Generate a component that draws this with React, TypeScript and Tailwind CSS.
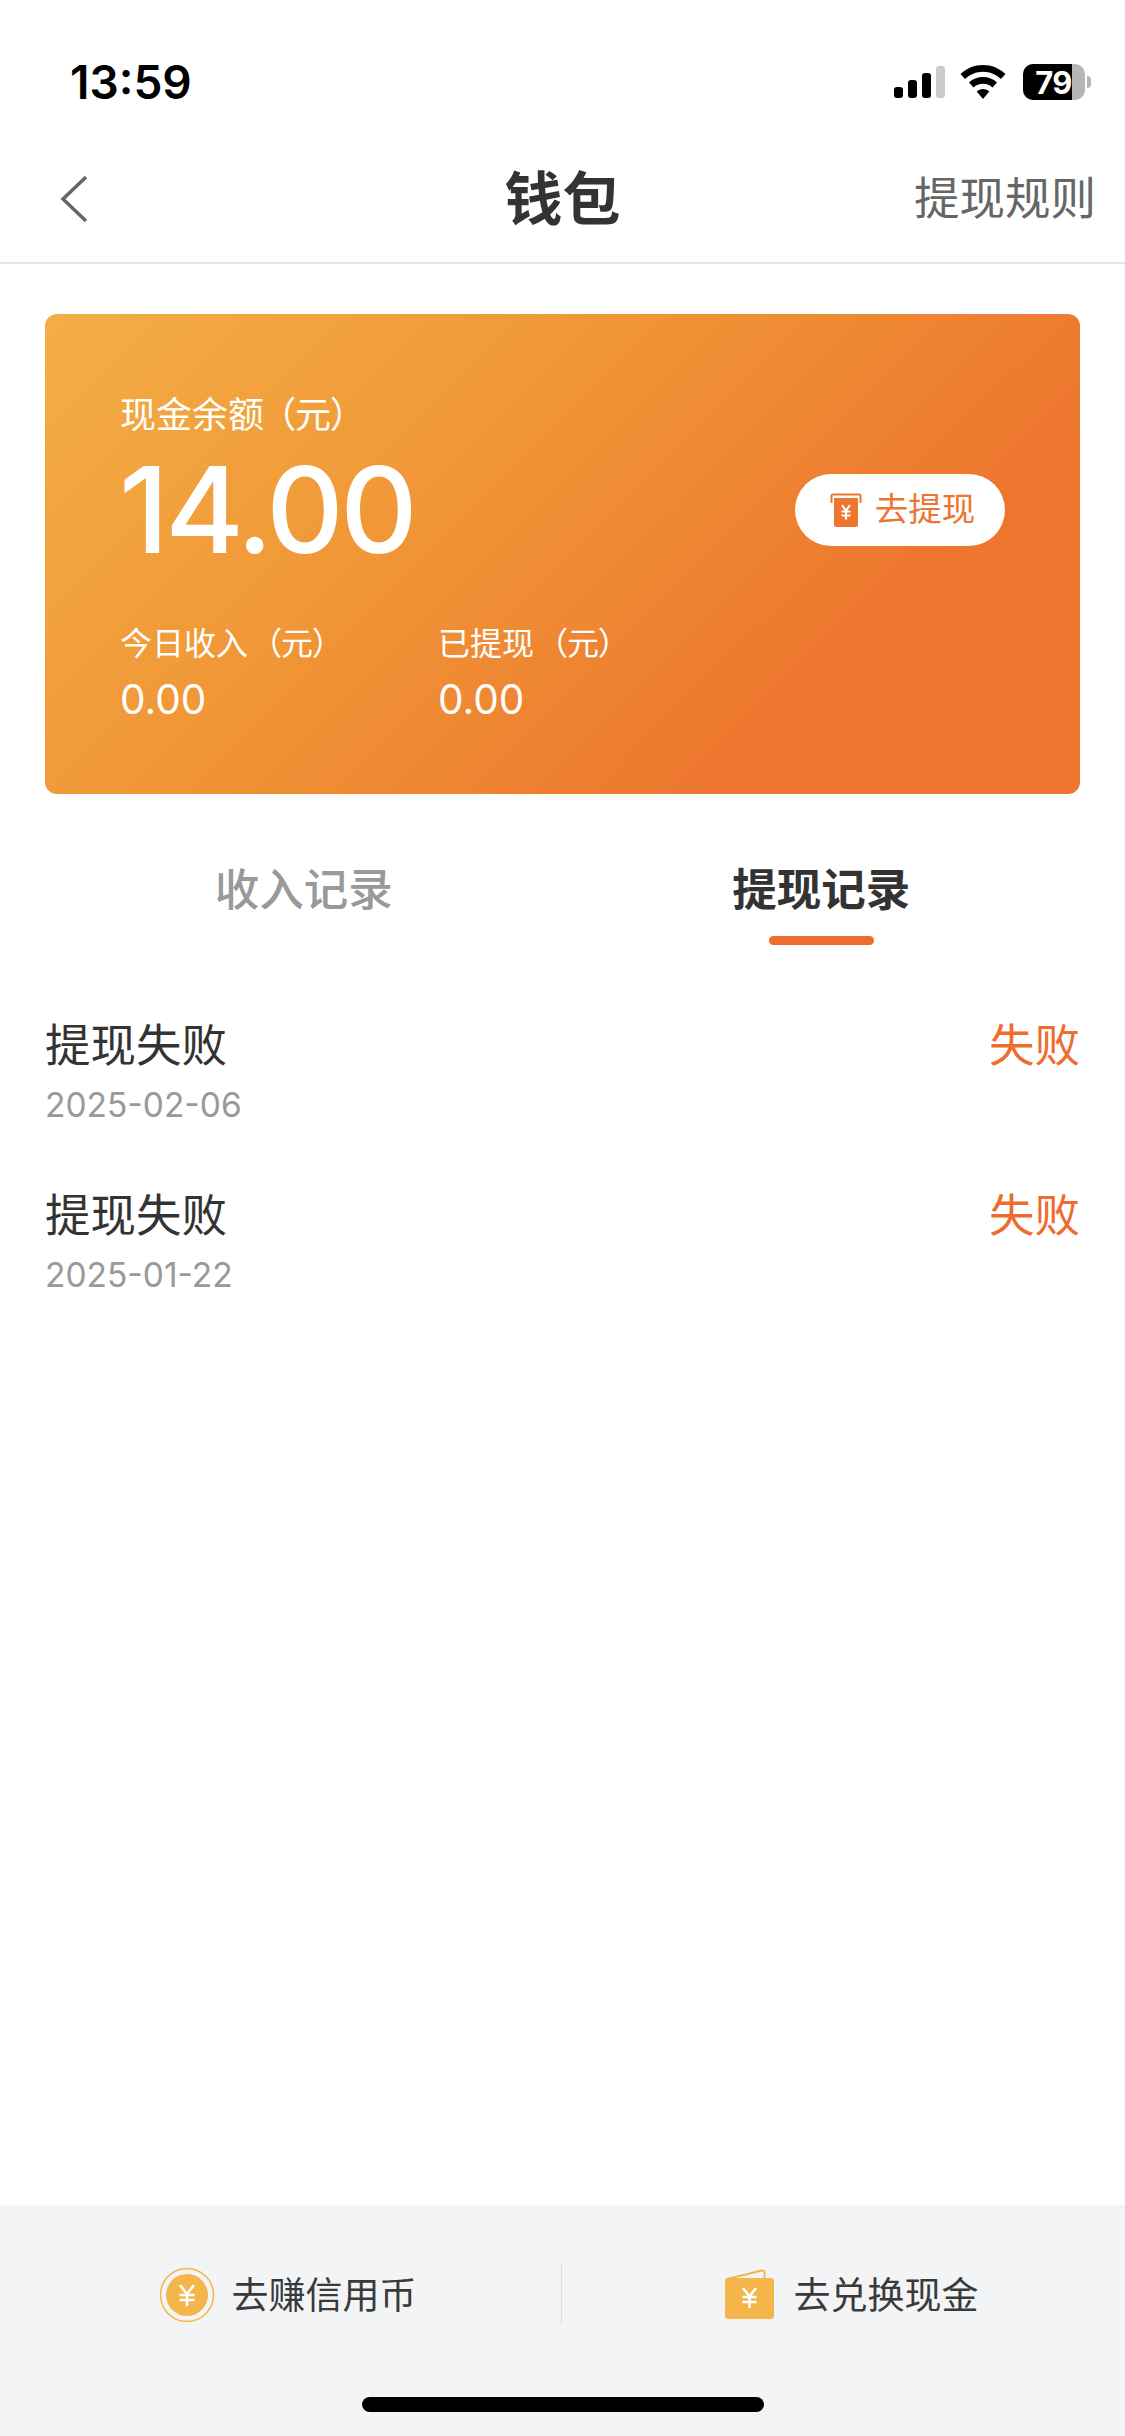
import React from 'react'

const cjk = "font-['Inter','Noto_Sans_CJK_SC',sans-serif]"

// 状态栏信号图标
function SignalIcon() {
  return (
    <svg width="52" height="32" viewBox="0 0 52 32">
      <rect x="0" y="21" width="9" height="11" rx="3" fill="#000" />
      <rect x="14" y="14" width="9" height="18" rx="3" fill="#000" />
      <rect x="28" y="7" width="9" height="25" rx="3" fill="#000" />
      <rect x="42" y="0" width="9" height="32" rx="3" fill="#ccc" />
    </svg>
  )
}

function WifiIcon() {
  return (
    <svg width="46" height="34" viewBox="0 0 46 34">
      <path d="M23 0C14.500 0 6.500 3.300 0.500 9l4.500 5C9.800 9.500 16.200 6.700 23 6.700S36.200 9.500 41 14l4.500-5C39.500 3.300 31.500 0 23 0z" fill="#000" />
      <path d="M23 12c-5.400 0-10.200 2-14 5.400l4.500 5c2.500-2.200 5.900-3.600 9.500-3.600s7 1.400 9.500 3.600l4.500-5C33.200 14 28.400 12 23 12z" fill="#000" />
      <path d="M23 24c-2.500 0-4.700 1-6.300 2.500L23 34l6.300-7.500C27.700 25 25.500 24 23 24z" fill="#000" />
    </svg>
  )
}

function BatteryIcon() {
  return (
    <div className="flex items-center">
      <div className="flex h-[36px] w-[62px] overflow-hidden rounded-[10px] bg-[#b5b5b5]">
        <div className="flex h-full w-[49px] items-center justify-end bg-black">
          <span className="font-['Inter',sans-serif] text-[31px] leading-none font-bold tracking-[-0.5px] text-white">79</span>
        </div>
      </div>
      <div className="ml-[2px] h-[12px] w-[4px] rounded-r-full bg-[#b5b5b5]" />
    </div>
  )
}

// 去提现按钮图标
function WithdrawIcon() {
  return (
    <svg width="32" height="34" viewBox="0 0 32 34">
      <path d="M1.500 10V3a1.500 1.500 0 0 1 1.500-1.500h26a1.500 1.500 0 0 1 1.500 1.500v7" fill="none" stroke="#EC7630" strokeWidth="2" />
      <path d="M4 5h24v27a2 2 0 0 1-2 2H6a2 2 0 0 1-2-2z" fill="#EC7630" />
      <path d="M12 12l4 5.500 4-5.500M11.500 18.500h9M11.500 22.500h9M16 17.500v9" fill="none" stroke="#fff" strokeWidth="2" />
    </svg>
  )
}

function CoinIcon() {
  return (
    <svg width="56" height="56" viewBox="0 0 56 56">
      <circle cx="28" cy="28" r="26.500" fill="none" stroke="#F4B54A" strokeWidth="1.500" />
      <circle cx="28" cy="28" r="21" fill="#F4B54A" />
      <path d="M21 18l7 9 7-9M20.500 28h15M20.500 33h15M28 27v12" fill="none" stroke="#fff" strokeWidth="2.500" />
    </svg>
  )
}

function WalletIcon() {
  return (
    <svg width="50" height="52" viewBox="0 0 50 52">
      <path d="M2 10L37 1.500a2 2 0 0 1 2.500 2V10" fill="none" stroke="#F4B54A" strokeWidth="2" />
      <rect x="0" y="9" width="49" height="41" rx="3" fill="#F4B54A" />
      <path d="M18 19l6.500 8.500 6.500-8.500M17.500 28h14M17.500 33h14M24.500 27v12" fill="none" stroke="#fff" strokeWidth="2.500" />
    </svg>
  )
}

function SmallYuanLabel({ text }: { text: string }) {
  return (
    <div className="text-[32px] leading-[44px]">
      {text}
      <span className="ml-[17px] [font-feature-settings:'palt']">（元）</span>
    </div>
  )
}

function WithdrawRow({ date }: { date: string }) {
  return (
    <div className="flex h-[170px] items-start justify-between">
      <div>
        <div className="text-[45.500px] leading-[60px] text-[#333]">提现失败</div>
        <div className="mt-[7px] text-[33.500px] leading-[44px] text-[#999]">{date}</div>
      </div>
      <div className="text-[45.500px] leading-[60px] text-[#EE6C2D]">失败</div>
    </div>
  )
}

export default function App() {
  return (
    <div className={`flex h-[2436px] w-[1125px] flex-col bg-white ${cjk}`}>
      {/* 状态栏 */}
      <div className="flex h-[136px] shrink-0 items-start justify-between pt-[58px] pr-[34px] pl-[70px]">
        <span className="font-['Inter',sans-serif] text-[46px] leading-[48px] font-semibold text-black">13:59</span>
        <div className="flex items-center pt-[6px]">
          <SignalIcon />
          <div className="mr-[17px] ml-[14px]">
            <WifiIcon />
          </div>
          <BatteryIcon />
        </div>
      </div>

      {/* 导航栏 */}
      <div className="relative flex h-[128px] shrink-0 items-center justify-between border-b-2 border-[#e6e6e6] pr-[29px] pl-[60px]">
        <svg width="28" height="48" viewBox="0 0 28 48">
          <path d="M26 2L3 24l23 22" fill="none" stroke="#666" strokeWidth="3.500" />
        </svg>
        <span className="absolute left-0 w-full text-center text-[58px] leading-[70px] font-bold text-[#333]">钱包</span>
        <span className="text-[45.500px] leading-[60px] text-[#666]">提现规则</span>
      </div>

      <div className="flex flex-1 flex-col px-[45px]">
        {/* 余额卡片 */}
        <div className="mt-[50px] flex h-[480px] items-start justify-between rounded-[12px] bg-[linear-gradient(135deg,#F3AE45_0%,#F09636_38%,#ED752E_76%)] pt-[79px] pr-[75px] pl-[75px]">
          <div className="text-white">
            <div className="text-[36px] leading-[44px]">
              现金余额
              <span className="ml-[13px] [font-feature-settings:'palt']">（元）</span>
            </div>
            <div className="mt-[8px] -ml-[1px] font-['Inter',sans-serif] text-[120px] leading-[130px] font-medium tracking-[-3.500px]">14.00</div>
            <div className="mt-[47px] flex">
              <div className="w-[318px]">
                <SmallYuanLabel text="今日收入" />
                <div className="mt-[7px] font-['Inter',sans-serif] text-[40.500px] leading-[54px]">0.00</div>
              </div>
              <div>
                <SmallYuanLabel text="已提现" />
                <div className="mt-[7px] font-['Inter',sans-serif] text-[40.500px] leading-[54px]">0.00</div>
              </div>
            </div>
          </div>
          <div className="mt-[81px] flex h-[72px] w-[210px] items-center justify-center gap-[13px] rounded-full bg-white pl-[5px]">
            <WithdrawIcon />
            <span className="text-[33.500px] leading-none text-[#EC7630]">去提现</span>
          </div>
        </div>

        {/* 标签页 */}
        <div className="mt-[66px] flex">
          <div className="flex flex-1 flex-col items-center">
            <span className="text-[44.500px] leading-[60px] font-medium text-[#999]">收入记录</span>
          </div>
          <div className="flex flex-1 flex-col items-center">
            <span className="text-[44.500px] leading-[60px] font-bold text-[#333]">提现记录</span>
            <div className="mt-[16px] h-[9px] w-[105px] rounded-full bg-[#EE6C2D]" />
          </div>
        </div>

        {/* 提现记录列表 */}
        <div className="mt-[71px]">
          <WithdrawRow date="2025-02-06" />
          <WithdrawRow date="2025-01-22" />
        </div>
      </div>

      {/* 底部操作栏 */}
      <div className="relative h-[231px] shrink-0 bg-[#F3F4F6]">
        <div className="mt-[57px] flex h-[66px] items-center">
          <div className="flex flex-1 items-center justify-center gap-[17px] pl-[14px]">
            <CoinIcon />
            <span className="text-[37px] leading-none text-[#3a3a3a]">去赚信用币</span>
          </div>
          <div className="h-[60px] w-[1px] bg-[#dedede]" />
          <div className="flex flex-1 items-center justify-center gap-[19px] pl-[16px]">
            <WalletIcon />
            <span className="text-[37px] leading-none text-[#3a3a3a]">去兑换现金</span>
          </div>
        </div>
        <div className="absolute bottom-[24px] left-[362px] h-[15px] w-[402px] rounded-full bg-black" />
      </div>
    </div>
  )
}
